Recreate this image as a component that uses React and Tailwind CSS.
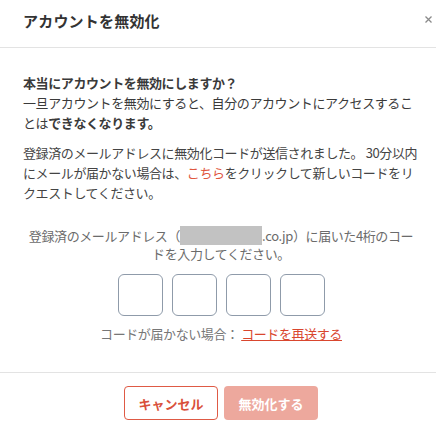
import React from "react";

export default function App() {
  const jp = { fontFamily: '"Noto Sans CJK JP", "Noto Sans", sans-serif' };

  return (
    <div style={jp} className="w-[436px] h-[424px] bg-white overflow-hidden text-[#333]">
      {/* header */}
      <div className="h-[48px] flex items-center justify-between pl-[23px] pr-[1px] border-b border-[#e3e3e3]">
        <h1 className="text-[15px] font-bold tracking-[0.2px] text-[#333] -mt-[4px]">アカウントを無効化</h1>
        <button className="w-[14px] h-[14px] flex items-center justify-center -mt-[8px]">
          <svg width="7" height="7" viewBox="0 0 7 7">
            <path d="M0.5 0.5L6.5 6.5M6.5 0.5L0.5 6.5" stroke="#8a8a8a" strokeWidth="1.3" />
          </svg>
        </button>
      </div>

      {/* body */}
      <div className="pl-[23px] pr-[17px] pt-[25px] pb-[30px] text-[13px] tracking-[-0.4px]">
        <p className="leading-[20px] text-[#3a3a3a]">
          <span className="font-bold">本当にアカウントを無効にしますか？</span>
          <br />
          一旦アカウントを無効にすると、自分のアカウントにアクセスすることは
          <span className="font-bold">できなくなります。</span>
        </p>
        <p className="mt-[10px] leading-[20px] text-[#444]">
          登録済のメールアドレスに無効化コードが送信されました。 30分以内にメールが届かない場合は、
          <span className="text-[#e0583f]">こちら</span>
          をクリックして新しいコードをリクエストしてください。
        </p>
        <p className="mt-[24px] leading-[17px] text-center text-[#6b6b6b] px-[1px]">
          登録済のメールアドレス（
          <span className="inline-block align-middle bg-[#c2c2c2] w-[82px] h-[19px] -mt-[3px]"></span>
          .co.jp）に届いた4桁のコードを入力してください。
        </p>
        <div className="mt-[12px] flex justify-center gap-[9px]">
          {[0, 1, 2, 3].map((i) => (
            <input
              key={i}
              type="text"
              maxLength={1}
              className="w-[45px] h-[42px] border border-[#8f9baa] rounded-[6px] text-center outline-none"
            />
          ))}
        </div>
        <p className="mt-[9px] leading-[17px] text-center text-[#777]">
          コードが届かない場合：{" "}
          <a href="#" className="text-[#d9462e] underline">コードを再送する</a>
        </p>
      </div>

      {/* footer */}
      <div className="border-t border-[#e3e3e3] pt-[13px] flex justify-center gap-[6px] pl-[6px]">
        <button className="w-[94px] h-[34px] rounded-[4px] border border-[#df5a45] bg-white text-[#d9503b] text-[13px] font-bold">
          キャンセル
        </button>
        <button className="w-[94px] h-[34px] rounded-[4px] bg-[#eda89d] text-white text-[13px] font-bold">
          無効化する
        </button>
      </div>
    </div>
  );
}
